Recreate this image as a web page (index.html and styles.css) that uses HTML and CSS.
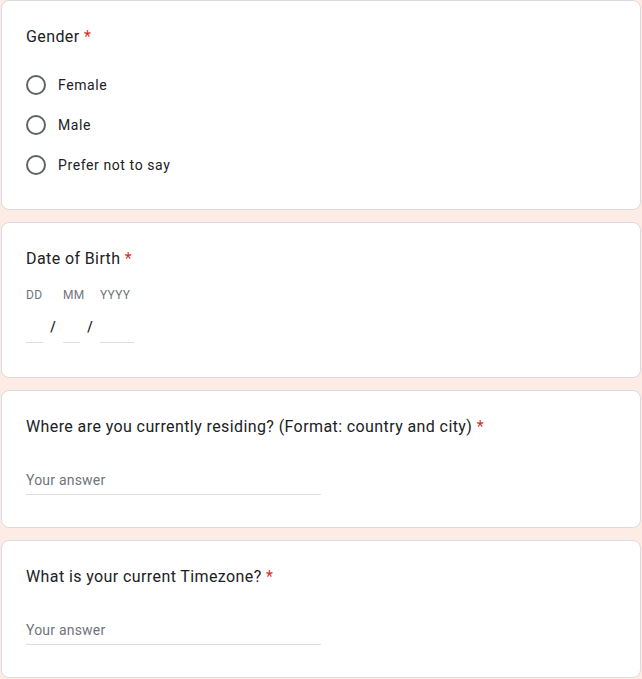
FILE: index.html
```html
<!DOCTYPE html>
<html>
<head>
<meta charset="utf-8">
<link rel="stylesheet" href="styles.css">
</head>
<body>
<div class="form">
  <div class="card card-gender">
    <div class="title">Gender <span class="req">*</span></div>
    <div class="options">
      <div class="option"><span class="radio"></span><span class="opt-label">Female</span></div>
      <div class="option"><span class="radio"></span><span class="opt-label">Male</span></div>
      <div class="option"><span class="radio"></span><span class="opt-label">Prefer not to say</span></div>
    </div>
  </div>
  <div class="card">
    <div class="title">Date of Birth <span class="req">*</span></div>
    <div class="date">
      <div class="date-part dd">
        <div class="date-label">DD</div>
        <div class="date-line"></div>
      </div>
      <div class="slash">/</div>
      <div class="date-part mm">
        <div class="date-label">MM</div>
        <div class="date-line"></div>
      </div>
      <div class="slash">/</div>
      <div class="date-part yyyy">
        <div class="date-label">YYYY</div>
        <div class="date-line"></div>
      </div>
    </div>
  </div>
  <div class="card">
    <div class="title">Where are you currently residing? (Format: country and city) <span class="req">*</span></div>
    <div class="answer"><span class="placeholder">Your answer</span></div>
  </div>
  <div class="card">
    <div class="title">What is your current Timezone? <span class="req">*</span></div>
    <div class="answer"><span class="placeholder">Your answer</span></div>
  </div>
</div>
</body>
</html>
```
FILE: styles.css
```css
html, body {
  margin: 0;
  padding: 0;
}
body {
  background: #fdebe5;
  font-family: Roboto, "Liberation Sans", Arial, sans-serif;
  color: #202124;
}
.form {
  display: flex;
  flex-direction: column;
  gap: 12px;
  padding: 0 1px;
}
.card {
  background: #ffffff;
  border: 1px solid #dadce0;
  border-radius: 8px;
  padding: 24px;
}
.title {
  font-size: 16px;
  line-height: 24px;
  letter-spacing: 0.4px;
  color: #202124;
}
.req {
  color: #d93025;
}
.options {
  margin-top: 16px;
  display: flex;
  flex-direction: column;
}
.option {
  height: 40px;
  display: flex;
  align-items: center;
}
.radio {
  box-sizing: border-box;
  width: 20px;
  height: 20px;
  border: 2px solid #5f6368;
  border-radius: 50%;
  margin-right: 12px;
}
.opt-label {
  font-size: 14px;
  letter-spacing: 0.6px;
  color: #202124;
}
.date {
  margin-top: 16px;
  display: flex;
  align-items: flex-start;
}
.date-part {
  display: flex;
  flex-direction: column;
}
.date-label {
  font-size: 12px;
  line-height: 16px;
  color: #70757a;
  letter-spacing: 0.3px;
  white-space: nowrap;
}
.date-line {
  margin-top: 39px;
  margin-bottom: 10px;
  height: 1px;
  background: #dadce0;
}
.dd .date-line, .mm .date-line { width: 17px; }
.yyyy .date-line { width: 34px; }
.dd, .mm { width: 17px; }
.slash {
  width: 20px;
  text-align: center;
  font-size: 14px;
  font-weight: 500;
  line-height: 16px;
  margin-top: 32px;
  color: #202124;
}
.answer {
  margin-top: 29px;
  width: 295px;
  height: 26px;
  border-bottom: 1px solid #dadce0;
  margin-bottom: 8px;
  line-height: 24px;
}
.placeholder {
  font-size: 14px;
  color: #70757a;
  letter-spacing: 0.2px;
}
```
